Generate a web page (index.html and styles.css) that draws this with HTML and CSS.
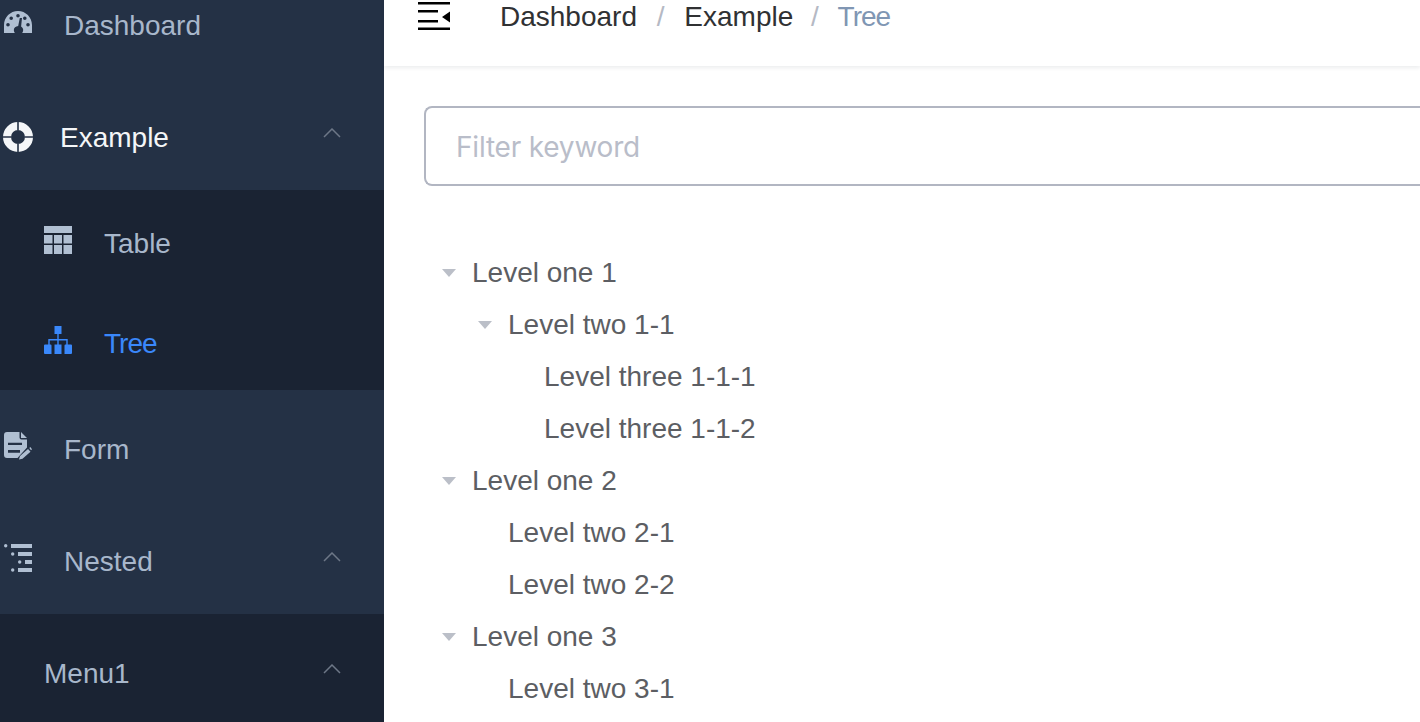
FILE: index.html
```html
<!DOCTYPE html>
<html lang="en">
<head>
  <meta charset="UTF-8" />
  <title>Tree</title>
  <link rel="stylesheet" href="styles.css">
</head>
<body>
  <div class="sidebar">
    <div class="menu-item">
      <svg class="icon" viewBox="0 0 28 22"><path fill-rule="evenodd" d="M0 22V14C0 6.3 6.300 0 14 0s14 6.300 14 14v8H18.200c.6-.9 1-1.900 1-3 0-1.500-.9-2.800-2.100-3.500l.9-8.500h-2.200l-1.600 8.100c-2.500.2-4.400 1.900-4.400 3.900 0 1.100.4 2.100 1 3zM14 3a1.800 1.800 0 1 0 0 3.600A1.800 1.800 0 0 0 14 3zM7.200 5.500a1.800 1.800 0 1 0 0 3.600 1.800 1.800 0 0 0 0-3.600zM20.800 5.500a1.800 1.800 0 1 0 0 3.600 1.800 1.800 0 0 0 0-3.600zM4 12a1.800 1.800 0 1 0 0 3.600A1.800 1.800 0 0 0 4 12zM24 12a1.800 1.800 0 1 0 0 3.600 1.800 1.800 0 0 0 0-3.600z"/></svg>
      <span class="label">Dashboard</span>
    </div>
    <div class="menu-item active">
      <svg class="icon example-icon" viewBox="0 0 30 30"><path fill-rule="evenodd" d="M15 0a15 15 0 1 0 0 30 15 15 0 0 0 0-30zM15 8a7 7 0 1 1 0 14 7 7 0 0 1 0-14z"/><path class="cut" d="M14.200 0h1.600v8h-1.600zM14.200 22h1.600v8h-1.600zM0 14.200h8v1.600H0zM22 14.200h8v1.600h-8z"/></svg>
      <span class="label example-label">Example</span>
      <svg class="chevron" viewBox="0 0 18 10"><path d="M1 9l8-8 8 8"/></svg>
    </div>
    <div class="submenu">
      <div class="sub-item">
        <svg class="icon" viewBox="0 0 28 28"><path d="M0 0h28v7H0zM0 9h8.500v8.500H0zM10 9h8v8.500h-8zM19.500 9H28v8.500h-8.500zM0 19h8.500v9H0zM10 19h8v9h-8zM19.500 19H28v9h-8.500z"/></svg>
        <span class="label">Table</span>
      </div>
      <div class="sub-item current">
        <svg class="icon" viewBox="0 0 28 28"><path d="M10.500 0h7v8h-7zM13.300 8h1.400v5h9v6h-1.400v-4.600h-7.600V19h-1.400v-4.600H5.700V19H4.300v-6h9zM0 19.500a1 1 0 0 1 1-1h5.500a1 1 0 0 1 1 1V28H1a1 1 0 0 1-1-1zM10.500 18.500h7V28h-7zM20.500 19.500a1 1 0 0 1 1-1H27a1 1 0 0 1 1 1V27a1 1 0 0 1-1 1h-6.500z"/></svg>
        <span class="label">Tree</span>
      </div>
    </div>
    <div class="menu-item">
      <svg class="icon" viewBox="0 0 28 28"><path fill-rule="evenodd" d="M3 0H15.500V5.500a2 2 0 0 0 2 2H23V15.500L13.500 26H3a3 3 0 0 1-3-3V3a3 3 0 0 1 3-3zM4 10.700V13H18V10.700zM4 18V20.700H16V18z"/><path d="M17 0L23 6H17zM15 27.500l1-3.500 8-7 2.500 2.800-8 7zM25.300 16l1-.9 1.700 2.200-1 .9z"/></svg>
      <span class="label">Form</span>
    </div>
    <div class="menu-item">
      <svg class="icon" viewBox="0 0 28 28"><circle cx="1.700" cy="1.700" r="1.700"/><path d="M7 0h21v4H7zM14 8h14v4H14zM21 16h7v4h-7zM14 24h14v4H14z"/><circle cx="8.700" cy="10" r="1.700"/><circle cx="15.700" cy="18" r="1.700"/><circle cx="8.700" cy="26" r="1.700"/></svg>
      <span class="label">Nested</span>
      <svg class="chevron" viewBox="0 0 18 10"><path d="M1 9l8-8 8 8"/></svg>
    </div>
    <div class="submenu">
      <div class="menu-item nested-item">
        <span class="label">Menu1</span>
        <svg class="chevron" viewBox="0 0 18 10"><path d="M1 9l8-8 8 8"/></svg>
      </div>
    </div>
  </div>

  <div class="main">
    <div class="navbar">
      <svg class="hamburger" viewBox="0 0 32 28"><path d="M0 0h32v2.500H0zM0 8h20v2.500H0zM0 18h20v2.500H0zM0 25.500h32V28H0zM32 9.500v11l-8-5.500z"/></svg>
      <div class="breadcrumb">
        <span>Dashboard</span>
        <span class="sep">/</span>
        <span>Example</span>
        <span class="sep sep-last">/</span>
        <span class="last">Tree</span>
      </div>
    </div>
    <div class="content">
      <input class="filter" type="text" placeholder="Filter keyword" />
      <div class="tree">
        <div class="node"><span class="caret"></span>Level one 1</div>
        <div class="node level-2"><span class="caret"></span>Level two 1-1</div>
        <div class="node level-3"><span class="caret leaf"></span>Level three 1-1-1</div>
        <div class="node level-3"><span class="caret leaf"></span>Level three 1-1-2</div>
        <div class="node"><span class="caret"></span>Level one 2</div>
        <div class="node level-2"><span class="caret leaf"></span>Level two 2-1</div>
        <div class="node level-2"><span class="caret leaf"></span>Level two 2-2</div>
        <div class="node"><span class="caret"></span>Level one 3</div>
        <div class="node level-2"><span class="caret leaf"></span>Level two 3-1</div>
      </div>
    </div>
  </div>
</body>
</html>
```

FILE: styles.css
```css
:root {
  --side-bg: #243145;
  --sub-bg: #1a2333;
  --side-icon: #b0bfd2;
  --side-text: #a8b7cb;
  --blue: #3a88fb;
}

* {
  box-sizing: border-box;
}

html, body {
  height: 100%;
  overflow: hidden;
}

body {
  margin: 0;
  display: flex;
  font-family: "Liberation Sans", Arial, sans-serif;
  background: #fff;
}

.sidebar {
  flex: none;
  width: 384px;
  height: 756px;
  margin-top: -34px;
  background: var(--side-bg);
  color: var(--side-icon);
  font-size: 28px;
}

.menu-item {
  display: flex;
  align-items: center;
  height: 112px;
  padding-left: 4px;
}

.label {
  margin-left: 32px;
  padding-top: 8px;
  color: var(--side-text);
}

.icon {
  flex: none;
  width: 28px;
  height: 28px;
  fill: currentColor;
}

.active {
  color: #f4f6f8;
}

.active .label {
  color: #f4f6f8;
}

.example-icon {
  width: 30px;
  height: 30px;
  margin-left: -1px;
  margin-top: 5px;
}

.cut {
  fill: var(--side-bg);
}

.example-label {
  margin-left: 27px;
}

.chevron {
  width: 18px;
  height: 10px;
  margin-left: auto;
  margin-right: 43px;
  margin-top: -2px;
  fill: none;
  stroke: #6d7787;
  stroke-width: 1.500;
}

.submenu {
  background: var(--sub-bg);
}

.sub-item {
  display: flex;
  align-items: center;
  height: 100px;
  padding-left: 44px;
}

.current {
  color: var(--blue);
}

.current .label {
  color: var(--blue);
  letter-spacing: -1px;
}

.nested-item {
  padding-left: 44px;
}

.nested-item .label {
  margin-left: 0;
}

.main {
  flex: 1;
  min-width: 0;
  margin-top: -34px;
}

.navbar {
  display: flex;
  align-items: center;
  height: 100px;
  padding-left: 34px;
  box-shadow: 0 2px 4px rgba(0, 21, 41, 0.08);
}

.hamburger {
  flex: none;
  width: 32px;
  height: 28px;
  fill: #000;
}

.breadcrumb {
  margin-left: 50px;
  padding-top: 2px;
  font-size: 28px;
  color: #303133;
}

.sep {
  margin: 0 12px;
  color: #b5b9c4;
}

.sep-last {
  margin: 0 11px 0 10px;
}

.last {
  color: #8096b3;
  letter-spacing: -1px;
}

.content {
  padding: 40px 0 40px 40px;
}

.filter {
  display: block;
  width: 100%;
  height: 80px;
  padding: 2px 30px 0;
  border: 2px solid #b2b6c2;
  border-right: none;
  border-radius: 8px 0 0 8px;
  font-family: "Inter", sans-serif;
  font-size: 28px;
  letter-spacing: -0.2px;
  outline: none;
}

.filter::placeholder {
  color: #b9bdc9;
}

.tree {
  margin-top: 60px;
  color: #5c5e63;
  font-size: 28px;
}

.node {
  display: flex;
  align-items: center;
  height: 52px;
  padding-top: 2px;
}

.level-2 {
  padding-left: 36px;
}

.level-3 {
  padding-left: 72px;
}

.caret {
  flex: none;
  width: 14px;
  height: 0;
  margin: -1px 16px 0 18px;
  border-style: solid;
  border-width: 8px 7px 0;
  border-color: #bbbfc8 transparent transparent;
}

.leaf {
  border-color: transparent;
}
```
